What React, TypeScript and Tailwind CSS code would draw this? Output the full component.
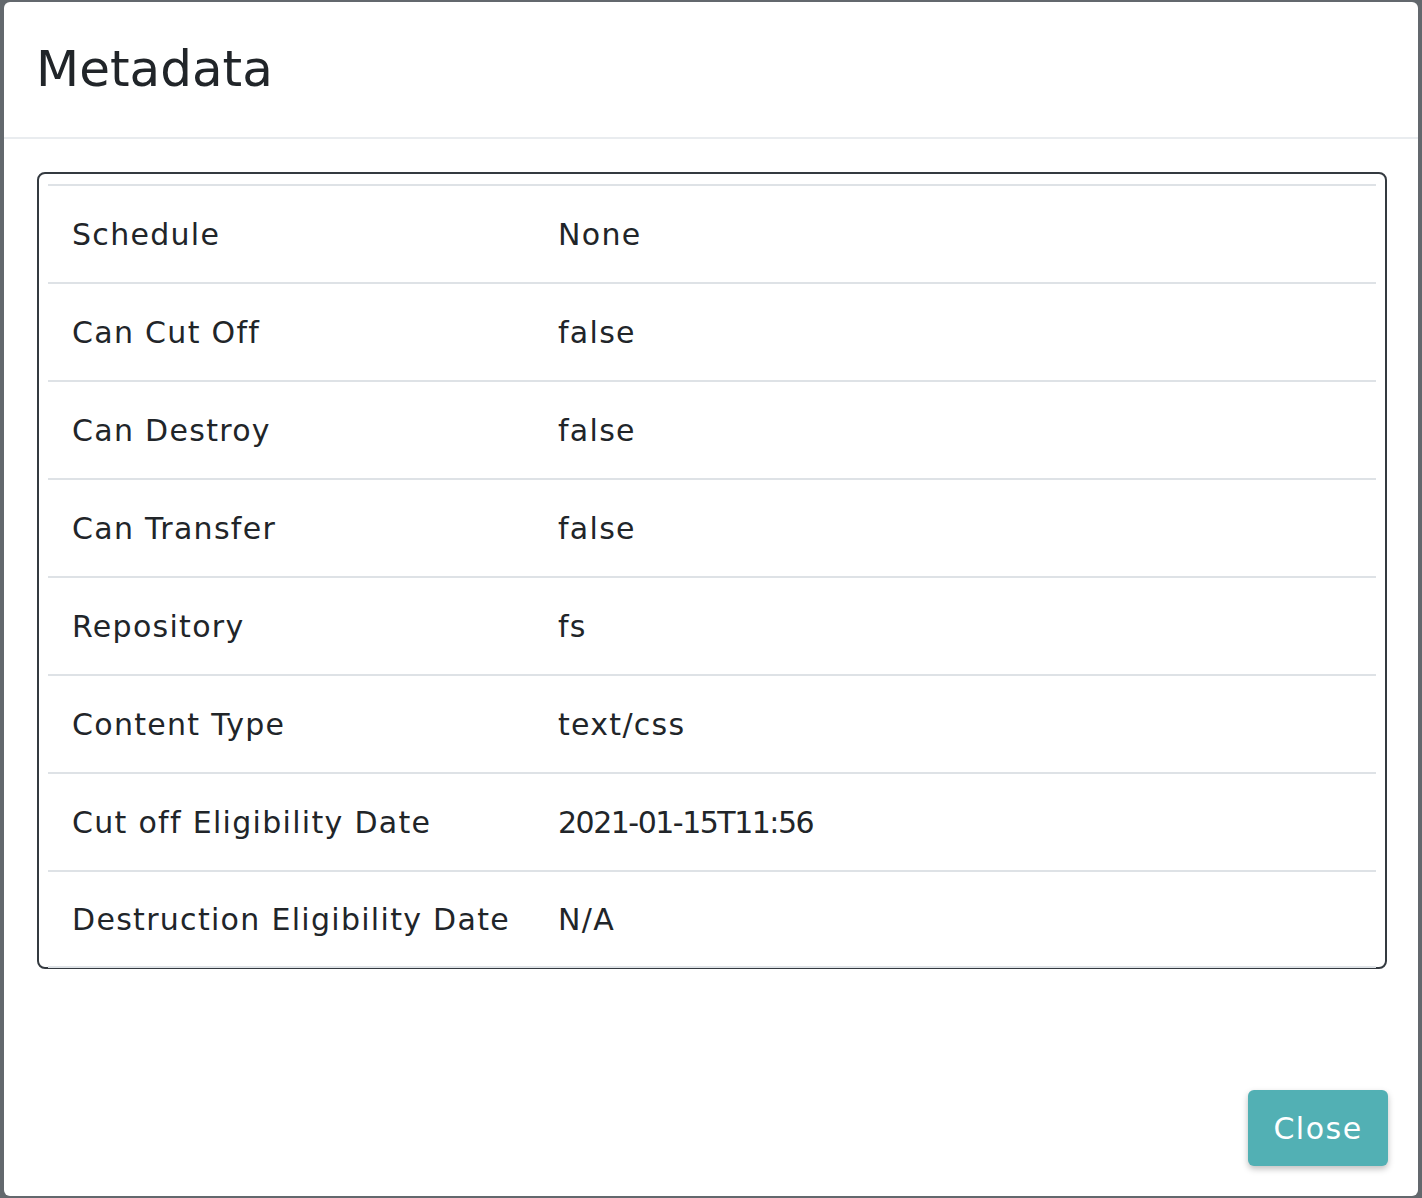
import React from 'react'

const rows: [string, string][] = [
  ['Schedule', 'None'],
  ['Can Cut Off', 'false'],
  ['Can Destroy', 'false'],
  ['Can Transfer', 'false'],
  ['Repository', 'fs'],
  ['Content Type', 'text/css'],
  ['Cut off Eligibility Date', '2021-01-15T11:56'],
  ['Destruction Eligibility Date', 'N/A'],
]

export default function App() {
  return (
    <div
      className="w-[1422px] h-[1198px] overflow-hidden bg-[#63686d] pt-[2px] px-[4px] pb-[2px]"
      style={{ fontFamily: '"DejaVu Sans", "Liberation Sans", sans-serif' }}
    >
      <div className="h-full bg-white rounded-[6px] flex flex-col text-[#212529]">
        {/* header */}
        <div className="h-[137px] shrink-0 border-b-2 border-[#e9ecef] px-[32px] flex items-center">
          <h1 className="text-[50px] leading-none font-normal pb-[2px]">Metadata</h1>
        </div>

        {/* body */}
        <div className="pt-[33px] pl-[33px] pr-[31px]">
          <div className="border-2 border-[#343a40] rounded-[8px] px-[9px] pt-[10px]">
            {rows.map(([label, value], i) => (
              <div
                key={label}
                className={
                  'h-[98px] flex items-center border-t-2 border-[#dee2e6] text-[30px]' +
                  (i === rows.length - 1 ? ' border-b-2 -mb-[1px]' : '')
                }
              >
                <div className="w-[510px] shrink-0 pl-[24px] tracking-[1.3px]">{label}</div>
                <div className={/\d/.test(value) ? 'tracking-[-1.5px]' : 'tracking-[1.3px]'}>
                  {value}
                </div>
              </div>
            ))}
          </div>
        </div>

        {/* footer */}
        <div className="flex-1 flex items-end justify-end pr-[30px] pb-[30px]">
          <button className="w-[140px] h-[76px] bg-[#52b0b4] text-white text-[30px] tracking-[1.5px] rounded-[6px] shadow-[0_3px_6px_rgba(0,0,0,0.25)]">
            Close
          </button>
        </div>
      </div>
    </div>
  )
}
